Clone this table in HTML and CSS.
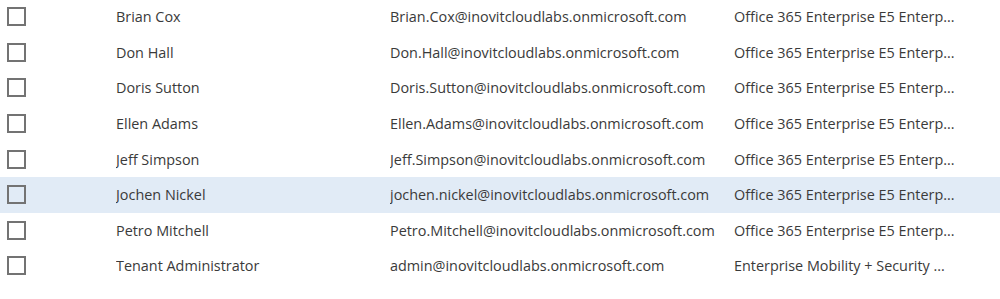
FILE: index.html
```html
<!DOCTYPE html>
<html lang="en">
<head>
<meta charset="utf-8">
<title>Users</title>
<link rel="stylesheet" href="styles.css">
</head>
<body>
<div class="list">
  <div class="row"><span class="check"></span><span class="name">Brian Cox</span><span class="email">Brian.Cox@inovitcloudlabs.onmicrosoft.com</span><span class="lic">Office 365 Enterprise E5 Enterp...</span></div>
  <div class="row"><span class="check"></span><span class="name">Don Hall</span><span class="email">Don.Hall@inovitcloudlabs.onmicrosoft.com</span><span class="lic">Office 365 Enterprise E5 Enterp...</span></div>
  <div class="row"><span class="check"></span><span class="name">Doris Sutton</span><span class="email">Doris.Sutton@inovitcloudlabs.onmicrosoft.com</span><span class="lic">Office 365 Enterprise E5 Enterp...</span></div>
  <div class="row"><span class="check"></span><span class="name">Ellen Adams</span><span class="email">Ellen.Adams@inovitcloudlabs.onmicrosoft.com</span><span class="lic">Office 365 Enterprise E5 Enterp...</span></div>
  <div class="row"><span class="check"></span><span class="name">Jeff Simpson</span><span class="email">Jeff.Simpson@inovitcloudlabs.onmicrosoft.com</span><span class="lic">Office 365 Enterprise E5 Enterp...</span></div>
  <div class="row hover"><span class="check"></span><span class="name">Jochen Nickel</span><span class="email">jochen.nickel@inovitcloudlabs.onmicrosoft.com</span><span class="lic">Office 365 Enterprise E5 Enterp...</span></div>
  <div class="row"><span class="check"></span><span class="name">Petro Mitchell</span><span class="email">Petro.Mitchell@inovitcloudlabs.onmicrosoft.com</span><span class="lic">Office 365 Enterprise E5 Enterp...</span></div>
  <div class="row"><span class="check"></span><span class="name">Tenant Administrator</span><span class="email">admin@inovitcloudlabs.onmicrosoft.com</span><span class="lic">Enterprise Mobility + Security ...</span></div>
</div>
</body>
</html>
```
FILE: styles.css
```css
html, body {
  margin: 0;
  padding: 0;
  background: #ffffff;
}
body {
  font-family: "Open Sans", "Noto Sans", "Liberation Sans", sans-serif;
  font-size: 14.4px;
  color: #3a3a3a;
  overflow: hidden;
}
.list {
  margin-top: -1px;
}
.row {
  display: grid;
  grid-template-columns: 116px 274px 344px 1fr;
  align-items: center;
  height: 35.6px;
}
.row.hover {
  background: #e1ebf6;
}
.check {
  box-sizing: border-box;
  width: 19px;
  height: 19px;
  margin-left: 7px;
  border: 2px solid #737373;
  background: transparent;
}
.name, .email, .lic {
  white-space: nowrap;
  overflow: hidden;
}
```
